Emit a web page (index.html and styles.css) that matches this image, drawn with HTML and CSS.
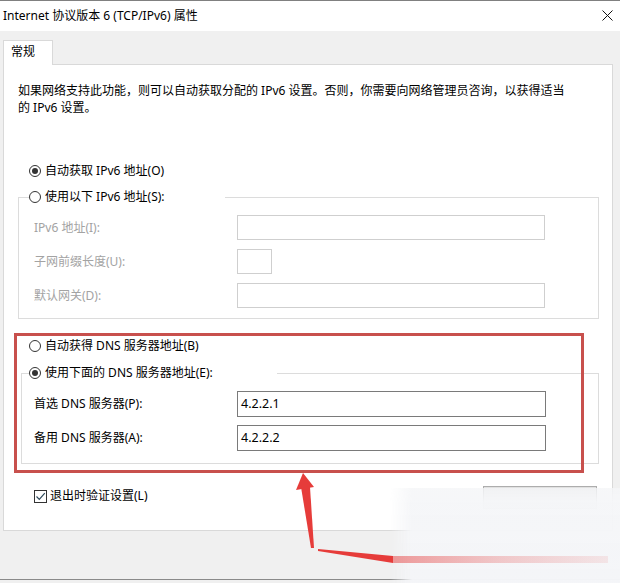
FILE: index.html
```html
<!DOCTYPE html>
<html lang="zh-CN">
<head>
<meta charset="utf-8">
<title>Internet 协议版本 6 (TCP/IPv6) 属性</title>
<link rel="stylesheet" href="styles.css">
</head>
<body>
<div class="window">
  <div class="titlebar">
    <span class="title">Internet 协议版本 6 (TCP/IPv6) 属性</span>
    <svg class="close" width="11" height="11" viewBox="0 0 11 11"><path d="M0.5 0.5 L10.5 10.5 M10.5 0.5 L0.5 10.5" stroke="#111" stroke-width="1" fill="none"/></svg>
  </div>
  <div class="tabs"><div class="tab">常规</div></div>
  <div class="panel">
    <p class="desc">如果网络支持此功能，则可以自动获取分配的 IPv6 设置。否则，你需要向网络管理员咨询，以获得适当<br>的 IPv6 设置。</p>
    <div class="radio-row r1"><span class="radio checked"></span><span>自动获取 IPv6 地址(O)</span></div>
    <fieldset class="group g1">
      <legend class="legend l1"><span class="radio"></span><span>使用以下 IPv6 地址(S):</span></legend>
      <div class="fields f1">
        <span class="lbl disabled">IPv6 地址(I):</span><span class="inp off wide"></span>
        <span class="lbl disabled">子网前缀长度(U):</span><span class="inp off small"></span>
        <span class="lbl disabled">默认网关(D):</span><span class="inp off wide"></span>
      </div>
    </fieldset>
    <div class="radio-row r3"><span class="radio"></span><span>自动获得 DNS 服务器地址(B)</span></div>
    <fieldset class="group g2">
      <legend class="legend l2"><span class="radio checked"></span><span>使用下面的 DNS 服务器地址(E):</span></legend>
      <div class="fields f2">
        <span class="lbl">首选 DNS 服务器(P):</span><span class="inp on">4.2.2.1</span>
        <span class="lbl">备用 DNS 服务器(A):</span><span class="inp on">4.2.2.2</span>
      </div>
    </fieldset>
    <div class="check-row">
      <span class="checkbox"><svg width="11" height="11" viewBox="0 0 11 11"><path d="M1.5 5.5 L4.3 8.4 L9.8 2.2" stroke="#2f4a5c" stroke-width="1.2" fill="none"/></svg></span>
      <span>退出时验证设置(L)</span>
      <span class="btn"></span>
    </div>
  </div>
  <div class="footer"></div>
  <div class="redbox"></div>
  <div class="watermark"></div>
  <svg class="arrow" width="620" height="583" viewBox="0 0 620 583">
    <defs>
      <linearGradient id="fade" x1="0" x2="1" y1="0" y2="0">
        <stop offset="0" stop-color="#e85a5a" stop-opacity="0.6"/>
        <stop offset="0.5" stop-color="#e87070" stop-opacity="0.35"/>
        <stop offset="1" stop-color="#e88080" stop-opacity="0.15"/>
      </linearGradient>
    </defs>
    <polygon points="303,473 296,490 314,487" fill="#e63c3a"/>
    <polygon points="301,487 310,487 314,548 311,548" fill="#e63c3a"/>
    <polygon points="318,549 393,556 393,563 318,551" fill="#e63c3a"/>
    <rect x="393" y="556" width="215" height="7" fill="url(#fade)"/>
  </svg>
</div>
</body>
</html>
```
FILE: styles.css
```css
* { box-sizing: border-box; }
html, body { margin: 0; padding: 0; }
body {
  width: 620px;
  height: 583px;
  overflow: hidden;
  background: #f0f0f0;
  font-family: "Noto Sans", "Noto Sans CJK SC", sans-serif;
  font-size: 12px;
  color: #000;
}
.window {
  position: relative;
  width: 620px;
  height: 583px;
}
.titlebar {
  height: 31px;
  background: #fff;
  border-top: 1px solid #808080;
  display: flex;
  align-items: center;
  justify-content: space-between;
  padding: 0 7px 0 3px;
}
.title { font-size: 12px; line-height: 16px; }
.close { display: block; margin-top: -1px; }
.tabs {
  padding-top: 9px;
  padding-left: 3px;
  margin-bottom: -1px;
}
.tab {
  position: relative;
  z-index: 1;
  width: 50px;
  height: 25px;
  background: #fff;
  border: 1px solid #d9d9d9;
  border-bottom: 0;
  padding-left: 7px;
  line-height: 22px;
}
.panel {
  margin-left: 3px;
  width: 610px;
  height: 467px;
  background: #fff;
  border: 1px solid #d9d9d9;
  padding-top: 17px;
}
.desc {
  margin: 0 0 0 14px;
  line-height: 17px;
}
.radio-row, .legend, .check-row {
  display: flex;
  align-items: center;
  height: 18px;
  line-height: 18px;
}
.radio {
  width: 12px;
  height: 12px;
  border: 1px solid #333;
  border-radius: 50%;
  background: #fff;
  display: flex;
  align-items: center;
  justify-content: center;
  margin-right: 4px;
  flex: none;
}
.radio.checked::after {
  content: "";
  width: 6px;
  height: 6px;
  border-radius: 50%;
  background: #333;
}
.r1 { margin: 46px 0 0 25px; }
.r3 { margin: 18px 0 0 25px; }
.group {
  margin: 0;
  padding: 0;
  border: 1px solid #dcdcdc;
  min-inline-size: 0;
}
.legend { padding: 0; background: #fff; }
.g1 { margin: 8px 0 0 14px; width: 581px; padding: 9px 0 10px 0; }
.l1 { margin-left: 10px; width: 196px; }
.g1 .fields { margin-left: 15px; }
.g2 { margin: 9px 0 0 17px; width: 578px; padding: 9px 0 12px 0; }
.l2 { margin-left: 7px; width: 248px; }
.g2 .fields { margin-left: 12px; }
.fields {
  display: grid;
  grid-template-columns: 203px auto;
  align-items: center;
  justify-items: start;
}
.f1 { row-gap: 9px; grid-auto-rows: 25px; }
.f2 { row-gap: 8px; grid-auto-rows: 26px; }
.lbl { line-height: 18px; }
.disabled { color: #a3a3a3; }
.inp {
  display: block;
  height: 100%;
  background: #fff;
  padding-left: 3px;
  line-height: 23px;
}
.inp.off { border: 1px solid #cfcfcf; }
.inp.wide { width: 308px; }
.inp.small { width: 35px; }
.inp.on { width: 309px; border: 1px solid #7a7a7a; font-size: 12.5px; }
.check-row {
  margin: 23px 0 0 30px;
}
.checkbox {
  width: 13px;
  height: 13px;
  border: 1px solid #333;
  display: flex;
  align-items: center;
  justify-content: center;
  margin-right: 3px;
  flex: none;
}
.checkbox svg { display: block; }
.btn {
  margin-left: auto;
  margin-right: 15px;
  align-self: flex-start;
  margin-top: -1px;
  width: 114px;
  height: 23px;
  border: 1px solid #adadad;
  background: #e1e1e1;
}
.footer {
  height: 49px;
  border-bottom: 1px solid #8a8a8a;
}
.redbox {
  position: absolute;
  left: 14px;
  top: 333px;
  width: 570px;
  height: 140px;
  border: 3px solid #c8504d;
}
.watermark {
  position: absolute;
  left: 390px;
  top: 488px;
  width: 230px;
  height: 95px;
  background: linear-gradient(to bottom, rgba(245,246,248,0.8) 0px, rgba(245,246,248,0.97) 14px, rgba(244,245,248,0.98) 100%);
  -webkit-mask-image: linear-gradient(to right, transparent 0, #000 22px);
  mask-image: linear-gradient(to right, transparent 0, #000 22px);
}
.arrow {
  position: absolute;
  left: 0;
  top: 0;
  pointer-events: none;
}
```
